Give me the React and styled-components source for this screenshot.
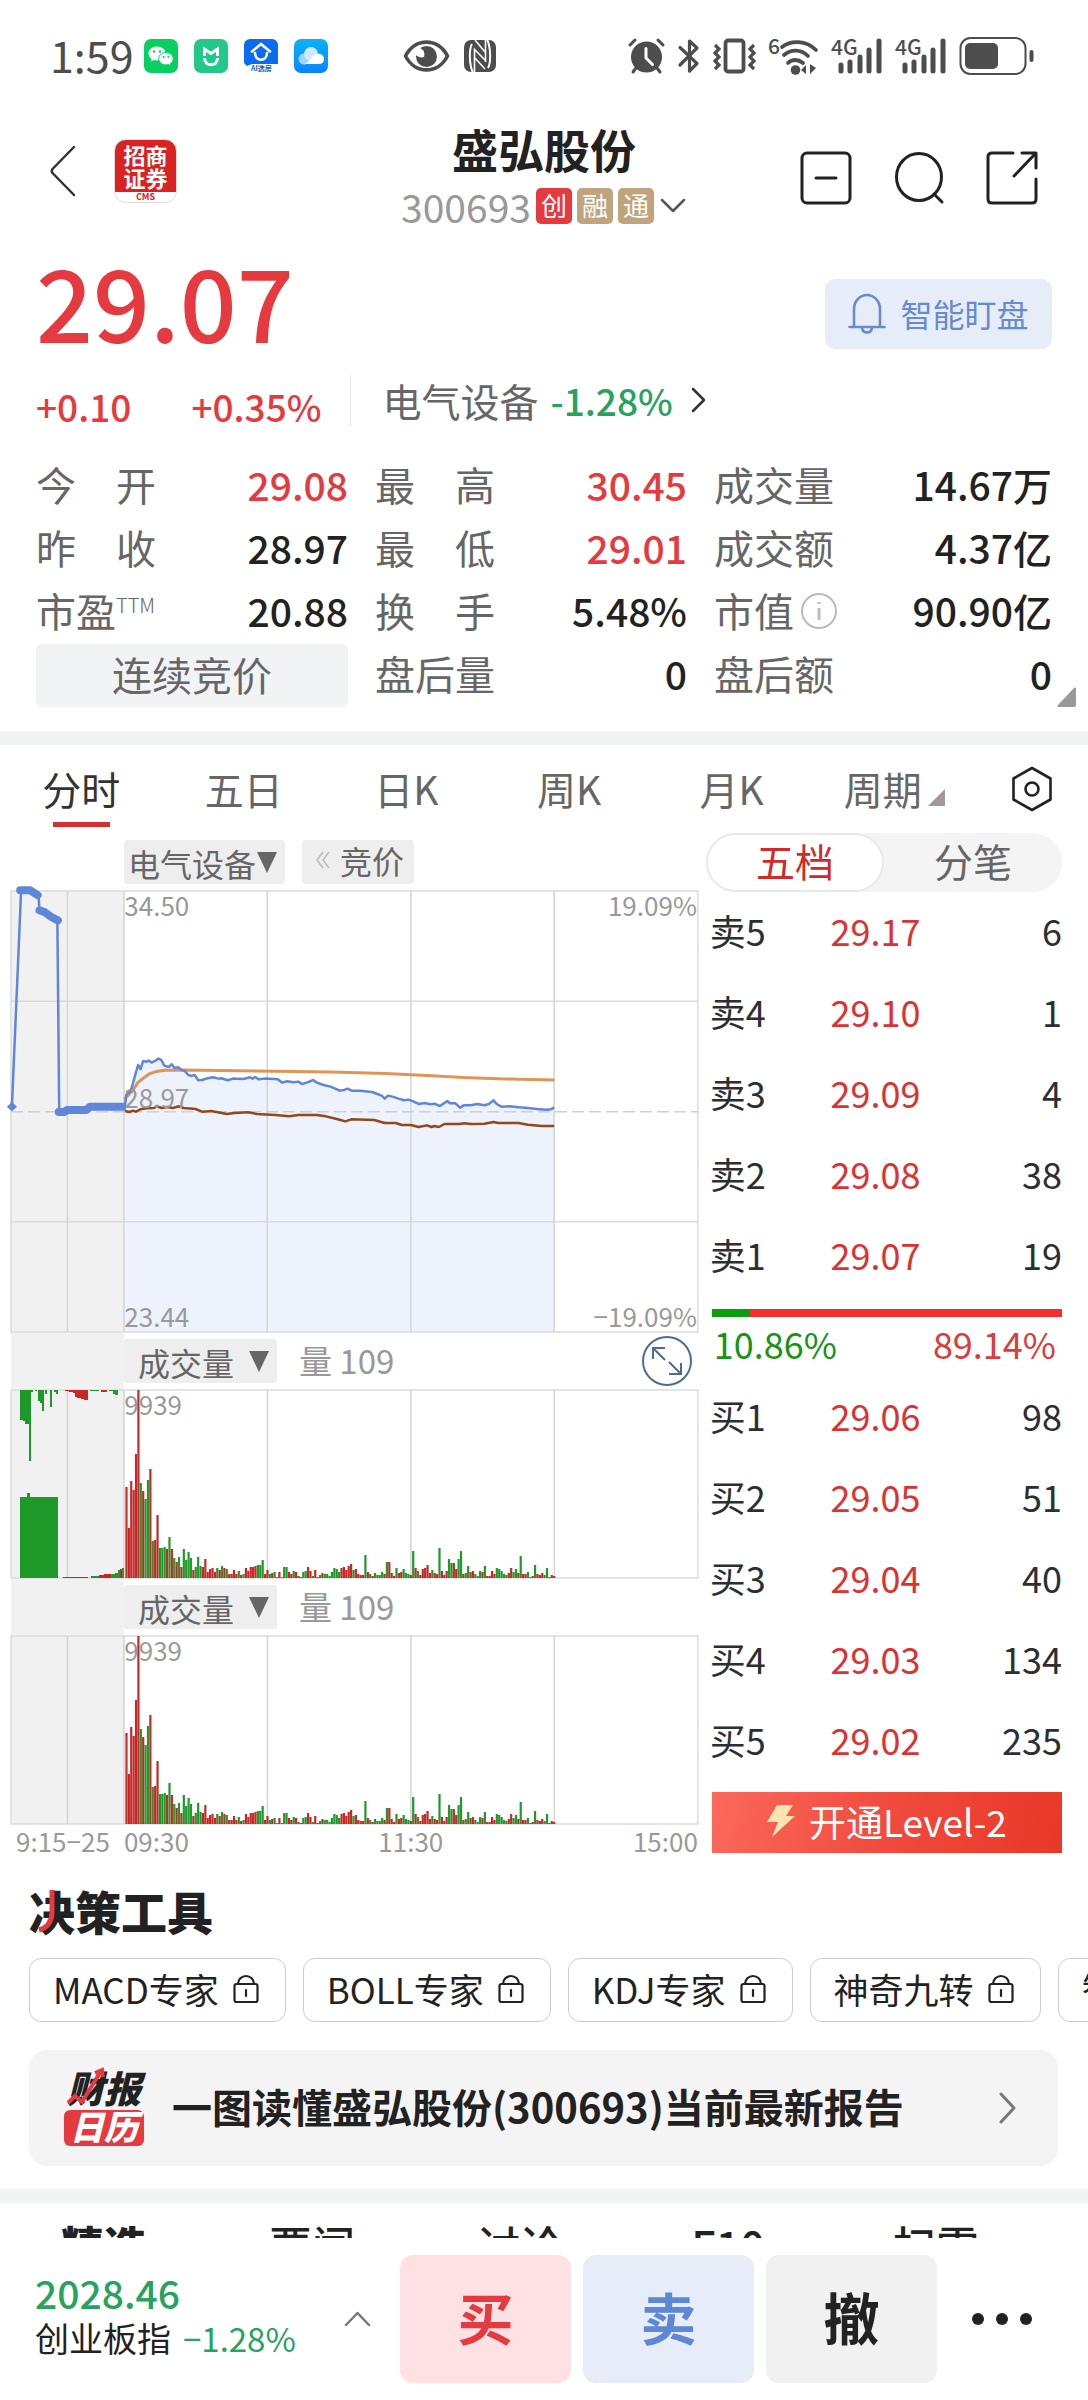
import React from 'react';
import styled, { createGlobalStyle } from 'styled-components';

const RED = '#e53a40';
const GREEN = '#27a35f';
const INK = '#222';
const GREY = '#666';

const GlobalStyle = createGlobalStyle`
  * {
    box-sizing: border-box;
  }

  body {
    margin: 0;
    background: #fff;
    color: ${INK};
    font-family: 'Noto Sans CJK SC', sans-serif;
  }

  button, select {
    margin: 0;
    padding: 0;
    border: 0;
    background: none;
    color: inherit;
    font: inherit;
    cursor: pointer;
  }

  a {
    color: inherit;
    text-decoration: none;
  }

  svg {
    display: block;
    flex: none;
    overflow: visible;
  }
`;

const Page = styled.div`
  display: flex;
  flex-direction: column;
  height: 100vh;
`;

const Scroller = styled.main`
  flex: 1;
  min-height: 0;
  overflow: hidden auto;
  scrollbar-width: none;
`;

const Band = styled.div`
  height: 14px;
  background: #f2f3f5;
`;

/* ---------- status bar ---------- */

const StatusBar = styled.div`
  display: flex;
  align-items: center;
  height: 112px;
  padding: 0 54px 0 50px;
  color: #4d4d4d;
`;

const Clock = styled.span`
  margin-right: 10px;
  padding-bottom: 4px;
  font-size: 43px;
  line-height: 56px;
`;

const StatusGroup = styled.div`
  display: flex;
  align-items: center;
  gap: ${p => p.$gap}px;
  margin-left: ${p => p.$left || 0};
`;

/* ---------- header ---------- */

const Header = styled.header`
  display: grid;
  grid-template-columns: 1fr auto 1fr;
  align-items: center;
  padding: 8px 50px 0;
`;

const HeaderLeft = styled.div`
  display: flex;
  align-items: center;
  gap: 38px;
  padding-bottom: 14px;
`;

const HeaderRight = styled.div`
  display: flex;
  justify-content: flex-end;
  gap: 42px;
`;

const BrandLogo = styled.a`
  width: 63px;
  height: 64px;
  border: 1px solid #ddd;
  border-radius: 12px;
  background: linear-gradient(#d92323 52px, #fff 52px);
  color: #fff;
  font-size: 22px;
  font-weight: 700;
  line-height: 23px;
  text-align: center;

  span {
    display: block;
    padding-top: 3px;
  }

  small {
    display: block;
    margin-top: 3px;
    color: #d92323;
    font-size: 9px;
    line-height: 10px;
  }
`;

const TitleBox = styled.div`
  text-align: center;
`;

const StockName = styled.h1`
  margin: 0;
  font-size: 46px;
  font-weight: 700;
  line-height: 56px;
`;

const CodeRow = styled.div`
  display: flex;
  align-items: center;
  gap: 5px;
  height: 60px;
  color: #999;
  font-size: 39px;
  line-height: 56px;
`;

const Tag = styled.span`
  width: 36px;
  height: 36px;
  border-radius: 5px;
  background: ${p => p.$color};
  color: #fff;
  font-size: 26px;
  line-height: 34px;
`;

/* ---------- quote ---------- */

const Quote = styled.section`
  padding: 14px 36px 24px;
`;

const PriceRow = styled.div`
  display: flex;
  align-items: flex-end;
  justify-content: space-between;
`;

const Price = styled.strong`
  color: ${RED};
  font-size: 100px;
  font-weight: 500;
  line-height: 99px;
`;

const WatchButton = styled.button`
  display: flex;
  align-items: center;
  justify-content: center;
  gap: 14px;
  width: 227px;
  height: 70px;
  padding-bottom: 2px;
  border-radius: 10px;
  background: #e7edf8;
  color: #668bd0;
  font-size: 32px;
`;

const ChangeRow = styled.div`
  display: flex;
  height: 52px;
  margin-top: 26px;
`;

const Changes = styled.div`
  display: flex;
  align-self: flex-end;
  gap: 60px;
  padding-right: 28px;
  color: ${RED};
  font-size: 37px;
  font-weight: 500;
  line-height: 42px;
`;

const Sector = styled.a`
  display: flex;
  align-items: center;
  gap: 12px;
  padding-bottom: 2px;
  padding-left: 32px;
  border-left: 1px solid #e6e6e6;
  color: ${GREY};
  font-size: 39px;
  line-height: 50px;

  b {
    margin-right: 6px;
    color: ${GREEN};
    font-size: 37px;
    font-weight: 500;
  }
`;

const Stats = styled.div`
  position: relative;
  display: grid;
  grid-template-columns: 12fr 12fr 13fr;
  grid-auto-rows: 63px;
  column-gap: 27px;
  margin-top: 28px;
`;

const Stat = styled.div`
  display: flex;
  align-items: center;
  justify-content: space-between;
  padding-bottom: 4px;
  font-size: 40px;
  line-height: 59px;
  white-space: nowrap;
`;

const StatLabel = styled.span`
  display: flex;
  align-items: center;
  gap: 6px;
  color: ${GREY};

  sup {
    margin-left: -6px;
    padding-bottom: 12px;
    font-size: 20px;
    font-weight: 300;
    line-height: 24px;
  }
`;

const StatValue = styled.span`
  color: ${p => (p.$up ? RED : INK)};
  font-size: 39px;
  font-weight: 500;
`;

const Phase = styled.div`
  border-radius: 5px;
  background: #f2f3f5;
  color: ${GREY};
  font-size: 40px;
  line-height: 60px;
  text-align: center;
`;

const Corner = styled.svg`
  position: absolute;
  right: -24px;
  bottom: 0;
`;

/* ---------- period tabs ---------- */

const PeriodTabs = styled.nav`
  display: grid;
  grid-template-columns: repeat(6, 13fr) 9fr;
  align-items: start;
  height: 82px;
`;

const PeriodTab = styled.button`
  position: relative;
  display: flex;
  align-items: flex-end;
  justify-content: center;
  gap: 6px;
  height: 82px;
  color: ${p => (p.$active ? '#333' : GREY)};
  font-size: 39px;
  line-height: 50px;
  padding: 18px 0 14px;

  svg {
    margin-bottom: 7px;
  }

  &::after {
    content: '';
    position: absolute;
    bottom: 0;
    left: 50%;
    width: 57px;
    height: 5px;
    margin-left: -28px;
    background: ${p => (p.$active ? '#d63031' : 'none')};
  }
`;

const SettingsButton = styled.button`
  display: flex;
  justify-content: center;
  padding-top: 21px;
`;

/* ---------- chart column ---------- */

const Market = styled.section`
  display: grid;
  grid-template-columns: minmax(0, 27fr) minmax(0, 14fr);
  column-gap: 8px;
  padding: 0 26px 0 11px;
`;

const ToolRow = styled.div`
  display: grid;
  grid-template-columns: 123fr 625fr;
  height: ${p => (p.$tall ? 64 : 58)}px;

  &::before {
    content: '';
    background: ${p => (p.$tall ? 'none' : '#f1f1f1')};
  }
`;

const Tools = styled.div`
  display: flex;
  align-items: center;
  padding-right: 6px;
  padding-top: ${p => (p.$tall ? 6 : 0)}px;
`;

const Picker = styled.label`
  display: flex;
  align-items: center;
  gap: ${p => (p.$wide ? 14 : 0)}px;
  height: 44px;
  padding: 0 8px 0 ${p => (p.$wide ? 14 : 4)}px;
  border-radius: 4px;
  background: #eee;
  color: ${GREY};
  font-size: 32px;

  select {
    appearance: none;
    height: 44px;
    padding-bottom: 4px;
  }

  select:focus {
    outline: none;
  }
`;

const AuctionButton = styled.button`
  display: flex;
  align-items: center;
  gap: 10px;
  height: 44px;
  margin-left: 17px;
  padding: 0 10px 4px 14px;
  border-radius: 4px;
  background: #eee;
  color: ${GREY};
  font-size: 32px;
`;

const Reading = styled.span`
  flex: 1;
  margin-left: 22px;
  padding-bottom: 2px;
  color: #999;
  font-size: 33px;
`;

const Plot = styled.div`
  position: relative;
  height: ${p => p.$height}px;
  color: #999;
  font-size: 26px;
  line-height: 28px;

  svg {
    width: 100%;
    height: 100%;
  }
`;

const ScaleLabel = styled.span`
  position: absolute;
  top: ${p => p.$top};
  ${p => (p.$right ? 'right: 1px' : 'left: 16.5%')};
`;

const Axis = styled.div`
  display: grid;
  grid-template-columns: 123fr 313fr 312fr;
  color: #999;
  font-size: 26px;
  line-height: 34px;

  span {
    white-space: nowrap;
  }

  span:first-child {
    padding-left: 5px;
  }

  span:last-child {
    display: flex;
    justify-content: space-between;
    margin-left: -38px;
  }
`;

/* ---------- order book ---------- */

const Book = styled.div`
  padding-top: 6px;
`;

const BookTabs = styled.div`
  display: flex;
  height: 59px;
  border-radius: 30px;
  background: #f4f4f4;
`;

const BookTab = styled.button`
  flex: 1;
  height: 59px;
  padding-bottom: 6px;
  border: 2px solid ${p => (p.$active ? '#e9e9e9' : 'transparent')};
  border-radius: 30px;
  background: ${p => (p.$active ? '#fff' : 'none')};
  color: ${p => (p.$active ? '#d12a2a' : GREY)};
  font-size: 39px;
  line-height: 48px;
`;

const Levels = styled.table`
  width: 100%;
  border-collapse: collapse;
  color: #2b2f33;
  font-size: 36px;
  line-height: 48px;

  tr {
    height: 81px;
  }

  th, td {
    padding: 0 0 6px;
    font-weight: 400;
    text-align: left;
  }

  th {
    width: 35%;
    padding-left: 4px;
  }

  td {
    color: #dc3232;
  }

  td:last-child {
    color: inherit;
    text-align: right;
  }
`;

const Ratio = styled.div`
  height: 8px;
  margin: 12px 0 0 6px;
  background: linear-gradient(to right, #0a9d0a 10.86%, #f52d2d 10.86%);
`;

const RatioText = styled.div`
  display: flex;
  justify-content: space-between;
  margin-bottom: 8px;
  padding: 0 6px 0 8px;
  color: #dc3c3c;
  font-size: 36px;
  line-height: 52px;

  span:first-child {
    color: #169416;
  }
`;

const LevelButton = styled.button`
  display: flex;
  align-items: center;
  justify-content: center;
  gap: 14px;
  width: calc(100% - 6px);
  height: 61px;
  margin: 10px 0 0 6px;
  padding-bottom: 3px;
  background: linear-gradient(100deg, #fa695c, #f04b3e 50%, #e83828);
  color: #fff;
  font-size: 37px;
  line-height: 50px;
`;

/* ---------- tools ---------- */

const Toolkit = styled.section`
  padding: 24px 0 23px 29px;
`;

const ToolkitTitle = styled.h2`
  position: relative;
  margin: 0 0 20px;
  font-size: 46px;
  font-weight: 900;
  line-height: 56px;

  svg {
    position: absolute;
    left: 8px;
    top: 7px;
  }
`;

const Experts = styled.div`
  display: flex;
  gap: 17px;
  overflow: hidden;
`;

const Expert = styled.button`
  display: flex;
  flex: none;
  align-items: center;
  gap: 14px;
  height: 64px;
  padding: 0 26px 2px 23px;
  border: 1px solid #ccc;
  border-radius: 12px;
  font-size: 35px;
  line-height: 52px;
`;

const ReportCard = styled.a`
  display: flex;
  align-items: center;
  height: 116px;
  margin: 28px 30px 0 0;
  padding: 0 42px 0 35px;
  border-radius: 18px;
  background: #f4f4f4;
  font-size: 40px;
  font-weight: 700;
`;

const ReportText = styled.span`
  flex: 1;
  margin-left: 28px;
  padding-bottom: 4px;
`;

const ReportLogo = styled.span`
  position: relative;
  display: block;
  width: 80px;
  font-size: 37px;
  font-style: italic;
  font-weight: 900;
  line-height: 34px;
  text-align: center;

  span {
    display: block;
    height: 36px;
    margin-top: 6px;
    border-radius: 6px;
    background: ${RED};
    color: #fff;
    font-size: 34px;
    line-height: 32px;
  }

  svg {
    position: absolute;
    left: 2px;
    top: -2px;
  }
`;

const InfoTabs = styled.nav`
  display: grid;
  grid-template-columns: repeat(5, 1fr);
  padding-right: 48px;
`;

const InfoTab = styled.button`
  font-size: 43px;
  font-weight: ${p => (p.$active ? 900 : 500)};
  line-height: 82px;
`;

/* ---------- trade bar ---------- */

const TradeBar = styled.footer`
  display: grid;
  grid-template-columns: 353fr 171fr 171fr 171fr 106fr;
  column-gap: 12px;
  padding: 17px 33px 17px 35px;
  background: #fff;
`;

const IndexBox = styled.div`
  display: flex;
  align-items: center;
  justify-content: space-between;
  padding-right: 17px;
  white-space: nowrap;
`;

const IndexValue = styled.div`
  color: ${GREEN};
  font-size: 39px;
  font-weight: 500;
  line-height: 44px;
`;

const IndexName = styled.div`
  padding-bottom: 6px;
  font-size: 34px;
  line-height: 48px;

  span {
    margin-left: 12px;
    color: ${GREEN};
    font-size: 33px;
  }
`;

const TradeButton = styled.button`
  height: 128px;
  padding-bottom: 7px;
  border-radius: 13px;
  background: ${p => p.$bg};
  color: ${p => p.$color};
  font-size: 56px;
  font-weight: 700;
`;

const MoreButton = styled.button`
  display: flex;
  align-items: center;
  justify-content: center;
`;

/* ---------- icons ---------- */

const Chevron = ({ w, h, d, color = '#333', width = 2.5 }) => (
  <svg width={w} height={h} fill="none" stroke={color} strokeWidth={width} strokeLinecap="round" strokeLinejoin="round">
    <path d={d} />
  </svg>
);

const DownTriangle = () => (
  <svg width="20" height="22" viewBox="0 0 20 22" fill="#666">
    <path d="M0 1h20L10 22z" />
  </svg>
);

const Lock = () => (
  <svg width="26" height="30" viewBox="0 0 26 30" fill="none" stroke="#222" strokeWidth="2.2" strokeLinecap="round">
    <rect x="1.5" y="10" width="23" height="18" rx="2" />
    <path d="M5 10a8 8 0 0 1 16 0M13 16v6" />
  </svg>
);

const WechatIcon = () => (
  <svg width="34" height="34" viewBox="0 0 34 34">
    <rect width="34" height="34" rx="7" fill="#07cf62" />
    <g fill="#fff">
      <path d="M13 7.500c-4.800 0-8.500 3-8.500 7 0 2.200 1.200 4.100 3.200 5.400L7 22.500l3-1.500c1 .3 2 .4 3 .4 4.700 0 8.500-3 8.500-6.900s-3.800-7-8.500-7z" />
      <path d="M22 13.500c-4.200 0-7.300 2.700-7.300 6.200s3.100 6.200 7.300 6.200c.9 0 1.700-.1 2.500-.4l2.500 1.400-.6-2.300c1.800-1.200 2.800-2.900 2.800-4.900 0-3.500-3.100-6.200-7.200-6.200z" stroke="#07cf62" strokeWidth="1" />
    </g>
    <g fill="#07cf62">
      <circle cx="10" cy="12.500" r="1.200" />
      <circle cx="16" cy="12.500" r="1.200" />
      <circle cx="19.600" cy="18" r="1" />
      <circle cx="24.500" cy="18" r="1" />
    </g>
  </svg>
);

const MiIcon = () => (
  <svg width="34" height="34" viewBox="0 0 34 34" fill="none" stroke="#fff" strokeWidth="3">
    <rect width="34" height="34" rx="7" fill="#22c889" stroke="none" />
    <path d="M10.500 17V10l6.500 4.500L23.500 10v7" />
    <path d="M10.500 19c0 9 13 9 13 0" />
  </svg>
);

const HouseIcon = () => (
  <svg width="34" height="34" viewBox="0 0 34 34">
    <path d="M6 0h22a6 6 0 0 1 6 6v19H8l-5 2-3-3V6a6 6 0 0 1 6-6z" fill="#0a6cf0" />
    <path d="M8 12.500l9-7.500 9 7.500M11 14c0 9 12 9 12 0" fill="none" stroke="#fff" strokeWidth="2.600" strokeLinecap="round" />
    <text x="7" y="32" fontSize="7" fontWeight="700" fill="#0a5cc8">AI选房</text>
  </svg>
);

const CloudIcon = () => (
  <svg width="34" height="34" viewBox="0 0 34 34">
    <defs>
      <linearGradient id="sky" x2="0" y2="1">
        <stop stopColor="#08b4fb" />
        <stop offset="1" stopColor="#0a84fb" />
      </linearGradient>
    </defs>
    <rect width="34" height="34" rx="7" fill="url(#sky)" />
    <circle cx="10" cy="20" r="5.500" fill="#9fd3fd" />
    <circle cx="17" cy="15" r="7" fill="#cfe8fe" />
    <path d="M9 25c6-1 7-5 10-8 4-4 11-2 11 3 0 3-2 5-5 5z" fill="#fff" />
  </svg>
);

const EyeIcon = () => (
  <svg width="47" height="34" viewBox="0 0 47 34" fill="none" stroke="#4d4d4d" strokeWidth="3.600">
    <path d="M2.500 17C12-1.500 35-1.500 44.500 17 35 35.500 12 35.500 2.500 17z" strokeLinejoin="round" />
    <circle cx="23.500" cy="17.500" r="10.500" fill="#4d4d4d" stroke="none" />
    <path d="M13 9c4-1 10 2 8 9-3 1-6 0-8-2z" fill="#fff" stroke="none" />
  </svg>
);

const NfcIcon = () => (
  <svg width="32" height="34" viewBox="0 0 32 34">
    <rect y="1" width="32" height="32" rx="7" fill="#4d4d4d" />
    <g fill="none" stroke="#fff" strokeWidth="2">
      <path d="M9 34C5 25 5 10 8 5M23 0c4 9 4 24 1 29" />
      <path d="M10.500 33V10.500L22 22M21.500 1v22M11 1l10 12M10 18l11 12" strokeWidth="1.600" />
    </g>
  </svg>
);

const AlarmIcon = () => (
  <svg width="37" height="36" viewBox="0 0 37 36" fill="none" stroke="#4d4d4d" strokeWidth="3" strokeLinecap="round">
    <circle cx="18.500" cy="19" r="15.500" fill="#4d4d4d" stroke="none" />
    <path d="M2 7l5-5M35 7l-5-5M8 30l-3 4M29 30l3 4" />
    <path d="M18 10.500V20l6.500 6.500" stroke="#fff" />
  </svg>
);

const BluetoothIcon = () => (
  <svg width="22" height="36" viewBox="0 0 22 36" fill="none" stroke="#4d4d4d" strokeWidth="3.200" strokeLinejoin="round" strokeLinecap="round">
    <path d="M2 9.500l17 16-7.500 7.500V3l7.500 7-17 17" />
  </svg>
);

const VibrateIcon = () => (
  <svg width="43" height="36" viewBox="0 0 43 36" fill="none" stroke="#4d4d4d" strokeWidth="3.200">
    <rect x="12.500" y="2.500" width="18" height="31" rx="2.500" strokeWidth="3.800" />
    <path d="M2 7l4 4-4 4 4 4-4 4 4 4-4 4M41 7l-4 4 4 4-4 4 4 4-4 4 4 4" />
  </svg>
);

const WifiIcon = () => (
  <svg width="49" height="38" viewBox="0 0 49 38" fill="none" stroke="#4d4d4d" strokeWidth="3.800" strokeLinecap="round">
    <text x="-1" y="17" fontSize="21" fontWeight="500" fill="#4d4d4d" stroke="none">6</text>
    <path d="M13 10c9-7 24-7 34 3M15 18c7-6 17-6 24 1M19 26c4-4 10-4 15 0" />
    <circle cx="26.500" cy="33" r="4.800" fill="#4d4d4d" stroke="none" />
    <path d="M32 33l5-5v9zM47 31l-6-4v10z" fill="#4d4d4d" stroke="none" />
  </svg>
);

const SignalIcon = () => (
  <svg width="51" height="38" viewBox="0 0 51 38" fill="none" stroke="#4d4d4d" strokeWidth="5" strokeLinecap="round">
    <text x="0" y="18" fontSize="21" fontWeight="500" fill="#4d4d4d" stroke="none">4G</text>
    <path d="M10 28v6M19 25v9M29 20v14M38 13v21M48 4v30" />
  </svg>
);

const BatteryIcon = () => (
  <svg width="75" height="38" viewBox="0 0 75 38" fill="none" stroke="#4d4d4d" strokeWidth="2">
    <rect x="1.500" y="1" width="65" height="36" rx="10" />
    <rect x="6" y="6" width="33" height="26" rx="5" fill="#4d4d4d" stroke="none" />
    <path d="M72.500 15v8" strokeWidth="4" strokeLinecap="round" />
  </svg>
);

/* ---------- data ---------- */

const stats = [
  ['今　开', '29.08', true],
  ['最　高', '30.45', true],
  ['成交量', '14.67万'],
  ['昨　收', '28.97'],
  ['最　低', '29.01', true],
  ['成交额', '4.37亿'],
  ['市盈', '20.88'],
  ['换　手', '5.48%'],
  ['市值', '90.90亿'],
];

const sells = [
  ['卖5', '29.17', 6],
  ['卖4', '29.10', 1],
  ['卖3', '29.09', 4],
  ['卖2', '29.08', 38],
  ['卖1', '29.07', 19],
];

const buys = [
  ['买1', '29.06', 98],
  ['买2', '29.05', 51],
  ['买3', '29.04', 40],
  ['买4', '29.03', 134],
  ['买5', '29.02', 235],
];

const priceLine =
  '271,752 275,705 285,692 290,668 296,638 301,615 306,628 312,603 318,606 324,602 330,608 338,603 345,596 351,600 358,617 368,621 374,613 380,624 388,622 396,630 402,632 410,645 418,648 424,645 432,661 440,660 452,655 464,652 476,656 482,655 496,661 508,656 530,657 545,652 550,656 556,651 563,658 580,656 605,658 615,668 625,664 640,667 650,665 658,672 668,668 676,664 682,660 690,668 705,675 720,680 740,692 750,690 757,686 766,692 785,692 810,696 822,702 832,708 838,716 845,707 855,710 868,716 880,721 890,719 900,724 912,732 925,729 938,733 946,731 958,738 966,731 974,723 980,730 992,730 1002,743 1010,736 1025,736 1040,732 1055,736 1065,732 1075,721 1082,732 1092,740 1110,739 1130,742 1150,744 1170,747 1190,749 1200,748 1207,742';

const averageLine =
  '271,718 280,705 290,690 300,668 312,655 325,642 340,635 360,631 400,630 480,632 600,634 720,636 840,641 930,647 1010,653 1100,657 1207,660';

const sectorLine =
  '272,753 282,756 290,752 296,755 308,747 320,745 335,744 342,739 352,744 364,741 376,744 390,739 400,744 426,747 440,755 460,753 480,758 494,762 510,759 540,757 560,762 600,765 630,769 650,765 690,765 710,769 740,779 752,784 765,778 815,780 838,789 862,789 875,795 895,795 912,801 930,796 940,801 946,798 956,801 968,792 1000,792 1012,790 1025,792 1055,791 1075,786 1085,789 1130,789 1150,794 1180,798 1207,798';

// one entry a minute: bar height and its direction
const volumes = (
  '91r 50r 97r 88r 124r 188r 95g 87r 79g 98g 109r 37g 38r 63r 30g 30g 31g 29r 41g 29r 20g 16r 21g 11r 29g 18g 26g 20g 8r 11g ' +
  '21g 12g 11r 19r 6r 9r 10r 6r 10g 8r 12g 10r 9g 4r 4r 8r 4r 7g 3r 4g 10r 7r 11r 11r 12r 13g 13g 18g 4r 8r ' +
  '4g 5r 6g 1g 6r 1g 11g 11g 6r 4r 7g 6r 2r 1r 6g 7g 11r 7r 2g 8r 1r 3g 5r 4g 4g 2g 6g 10g 9g 6g ' +
  '10r 11r 8r 12r 14r 8g 9r 4r 3r 3r 23g 6r 4g 2r 5g 3g 3g 6g 4r 16g 16r 5r 2r 10g 5r 6r 9g 5g 4g 3r ' +
  '27g 10r 7g 3r 9r 10r 13r 5r 8g 5r 4r 30g 7r 3r 7r 19g 15g 15r 9r 19g 27g 4r 5g 12g 6r 7r 4g 2g 7g 6r ' +
  '12g 2r 2r 7r 4r 10g 9g 7g 4g 3g 5r 10r 6g 9g 5r 22g 4r 4r 6g 1g 2r 13g 4r 3r 5r 3g 10g 1r 3r 2r'
)
  .split(' ')
  .map(item => ({ size: parseInt(item, 10), up: item.endsWith('r') }));

const UP = '#c62828';
const DOWN = '#1f9a2a';

// call auction bars hanging from the top edge: x, width, height, direction
const auctionTop = [
  [9, 3, 30], [12, 2, 31], [14, 4, 34], [18, 2, 71], [20, 2, 2], [24, 2, 1], [27, 2, 11], [29, 2, 13],
  [31, 2, 21], [34, 2, 4], [39, 2, 17], [43, 2, 2], [45, 2, 4], [54, 4, 1, 1], [58, 4, 2, 1],
  [62, 2, 3, 1], [64, 2, 7, 1], [66, 4, 8, 1], [70, 3, 9, 1], [73, 4, 10, 1], [79, 9, 1],
  [90, 6, 2, 1], [98, 4, 1], [102, 2, 4], [104, 3, 5],
];

const auctionBottom = [
  [9, 38, 81], [16, 3, 85], [52, 25, 1, 1], [80, 8, 2], [88, 5, 3, 1], [93, 7, 4, 1],
  [100, 4, 4], [104, 3, 5], [107, 2, 8], [109, 2, 9, 1], [111, 2, 10],
];

/* ---------- parts ---------- */

const PricePlot = () => (
  <Plot $height={441}>
    <svg viewBox="24 94 1496 1321" preserveAspectRatio="none" fill="none">
      <rect x="24" y="94" width="246" height="1321" fill="#f1f1f1" />
      <polygon points={`270,1415 ${priceLine} 1207,1415`} fill="#edf2fd" />
      <g stroke="#dcdcdc" strokeWidth="1.500">
        <path d="M24 94H1520V1415H24zM24 424H1520M24 1085H1520" vectorEffect="non-scaling-stroke" />
        <path d="M147 94V1415M270 94V1415M582 94V1415M895 94V1415M1207 94V1415" stroke="#d4d4d4" vectorEffect="non-scaling-stroke" />
        <path d="M24 755H1520" strokeDasharray="12 5" stroke="#d0d0d0" vectorEffect="non-scaling-stroke" />
      </g>
      <g strokeWidth="2.500" strokeLinejoin="round">
        <polyline points={averageLine} stroke="#e09458" strokeWidth="3" vectorEffect="non-scaling-stroke" />
        <polyline points={sectorLine} stroke="#94461c" vectorEffect="non-scaling-stroke" />
        <polyline points={priceLine} stroke="#5f86d8" vectorEffect="non-scaling-stroke" />
        <path d="M26 740L46 92L84 108L86 152L125 182L129 755" stroke="#5f86d8" vectorEffect="non-scaling-stroke" />
        <path
          d="M44 92H66L82 106M86 152L98 158L112 172L126 182M128 756H140L146 750H188L196 740H266"
          stroke="#5f86d8"
          strokeWidth="8"
          strokeLinecap="round"
          vectorEffect="non-scaling-stroke"
        />
        <path d="M26 726L37 740L26 754L15 740z" fill="#5f86d8" />
      </g>
    </svg>
    <ScaleLabel $top="0">34.50</ScaleLabel>
    <ScaleLabel $top="0" $right>19.09%</ScaleLabel>
    <ScaleLabel $top="192px">28.97</ScaleLabel>
    <ScaleLabel $top="411px">23.44</ScaleLabel>
    <ScaleLabel $top="411px" $right>−19.09%</ScaleLabel>
  </Plot>
);

const VolumePlot = ({ auction }) => (
  <Plot $height={188}>
    <svg viewBox="0 0 687 188" preserveAspectRatio="none">
      <rect width="113" height="188" fill="#f1f1f1" />
      <path d="M0 0H687V188H0z" fill="none" stroke="#dcdcdc" strokeWidth="1.500" />
      <path d="M56.500 0V188M113 0V188M256.500 0V188M400 0V188M543.500 0V188" stroke="#d4d4d4" strokeWidth="1.500" />
      {volumes.map((bar, i) => (
        <rect
          key={i}
          x={114.4 + i * 2.39}
          y={188 - bar.size}
          width="2.200"
          height={bar.size}
          fill={bar.up ? UP : DOWN}
        />
      ))}
      {auction && auctionTop.map(([x, w, h, up]) => (
        <rect key={x} x={x} width={w} height={h} fill={up ? UP : DOWN} />
      ))}
      {auction && auctionBottom.map(([x, w, h, up]) => (
        <rect key={x} x={x} y={188 - h} width={w} height={h} fill={up ? UP : DOWN} />
      ))}
    </svg>
    <ScaleLabel $top="0">9939</ScaleLabel>
  </Plot>
);

const VolumeTools = ({ children }) => (
  <ToolRow>
    <Tools>
      <Picker $wide>
        <select aria-label="指标">
          <option>成交量</option>
        </select>
        <DownTriangle />
      </Picker>
      <Reading>量 109</Reading>
      {children}
    </Tools>
  </ToolRow>
);

const LevelTable = ({ rows }) => (
  <Levels>
    <tbody>
      {rows.map(([name, price, count]) => (
        <tr key={name}>
          <th scope="row">{name}</th>
          <td>{price}</td>
          <td>{count}</td>
        </tr>
      ))}
    </tbody>
  </Levels>
);

const App = () => (
  <Page>
    <GlobalStyle />
    <Scroller>
      <StatusBar>
        <Clock>1:59</Clock>
        <StatusGroup $gap={16}>
          <WechatIcon />
          <MiIcon />
          <HouseIcon />
          <CloudIcon />
        </StatusGroup>
        <StatusGroup $gap={14} $left="75px">
          <EyeIcon />
          <NfcIcon />
        </StatusGroup>
        <StatusGroup $gap={13} $left="auto">
          <AlarmIcon />
          <BluetoothIcon />
          <VibrateIcon />
          <WifiIcon />
          <SignalIcon />
          <SignalIcon />
          <BatteryIcon />
        </StatusGroup>
      </StatusBar>

      <Header>
        <HeaderLeft>
          <button aria-label="返回">
            <Chevron w={26} h={54} d="M24 3L2.500 25Q1 27 2.500 29L24 51" />
          </button>
          <BrandLogo href="#cms">
            <span>招商<br />证券</span>
            <small>CMS</small>
          </BrandLogo>
        </HeaderLeft>
        <TitleBox>
          <StockName>盛弘股份</StockName>
          <CodeRow>
            300693
            <Tag $color={RED}>创</Tag>
            <Tag $color="#bfa47e">融</Tag>
            <Tag $color="#bfa47e">通</Tag>
            <Chevron w={28} h={18} d="M3 3L14 14L25 3" color="#555" />
          </CodeRow>
        </TitleBox>
        <HeaderRight>
          <button aria-label="删除自选">
            <svg width="52" height="54" fill="none" stroke="#222" strokeWidth="3" strokeLinecap="round">
              <rect x="2" y="2" width="48" height="50" rx="5" />
              <path d="M16 27h20" />
            </svg>
          </button>
          <button aria-label="搜索">
            <svg width="50" height="54" fill="none" stroke="#222" strokeWidth="3" strokeLinecap="round">
              <ellipse cx="25" cy="26" rx="22.500" ry="23.500" />
              <path d="M40 43l8 8" />
            </svg>
          </button>
          <button aria-label="分享">
            <svg width="52" height="54" fill="none" stroke="#222" strokeWidth="3" strokeLinecap="round" strokeLinejoin="round">
              <path d="M27 2H6Q2 2 2 6V48Q2 52 6 52H46Q50 52 50 48V28M36 2H50V17M49 3L28 25" />
            </svg>
          </button>
        </HeaderRight>
      </Header>

      <Quote>
        <PriceRow>
          <Price>29.07</Price>
          <WatchButton>
            <svg width="38" height="41" fill="none" stroke="#668bd0" strokeWidth="2.600" strokeLinecap="round">
              <path d="M1.500 34H36.500M6 34V16a13 14 0 0 1 26 0V34M14 35c1 6 9 6 10 0" />
            </svg>
            智能盯盘
          </WatchButton>
        </PriceRow>
        <ChangeRow>
          <Changes>
            <span>+0.10</span>
            <span>+0.35%</span>
          </Changes>
          <Sector href="#sector">
            电气设备
            <b>-1.28%</b>
            <Chevron w={16} h={26} d="M2 2L13 13L2 24" />
          </Sector>
        </ChangeRow>
        <Stats>
          {stats.map(([label, value, up]) => (
            <Stat key={label}>
              <StatLabel>
                {label}
                {label === '市盈' && <sup>TTM</sup>}
                {label === '市值' && (
                  <svg width="38" height="38" fill="none" stroke="#bbb" strokeWidth="2">
                    <circle cx="19" cy="19" r="17" />
                    <path d="M19 16v12M19 10v2" strokeWidth="3" />
                  </svg>
                )}
              </StatLabel>
              <StatValue $up={up}>{value}</StatValue>
            </Stat>
          ))}
          <Phase>连续竞价</Phase>
          <Stat>
            <StatLabel>盘后量</StatLabel>
            <StatValue>0</StatValue>
          </Stat>
          <Stat>
            <StatLabel>盘后额</StatLabel>
            <StatValue>0</StatValue>
          </Stat>
          <Corner width="19" height="20" fill="#999">
            <path d="M19 1V18Q19 20 17 20H1Q0 19 1 18L17 1Q18 0 19 1z" />
          </Corner>
        </Stats>
      </Quote>

      <Band />

      <PeriodTabs>
        <PeriodTab $active>分时</PeriodTab>
        <PeriodTab>五日</PeriodTab>
        <PeriodTab>日K</PeriodTab>
        <PeriodTab>周K</PeriodTab>
        <PeriodTab>月K</PeriodTab>
        <PeriodTab>
          周期
          <svg width="17" height="17" fill="#a39999">
            <path d="M17 0V17H0z" />
          </svg>
        </PeriodTab>
        <SettingsButton aria-label="设置">
          <svg width="42" height="46" fill="none" stroke="#222" strokeWidth="2.600" strokeLinejoin="round">
            <path d="M21 2L39.500 12.500V33.500L21 44L2.500 33.500V12.500z" />
            <circle cx="21" cy="23" r="6.500" />
          </svg>
        </SettingsButton>
      </PeriodTabs>

      <Market>
        <div>
          <ToolRow $tall>
            <Tools $tall>
              <Picker>
                <select aria-label="板块">
                  <option>电气设备</option>
                </select>
                <DownTriangle />
              </Picker>
              <AuctionButton>
                <svg width="14" height="18" fill="none" stroke="#bbb" strokeWidth="1.500">
                  <path d="M7 1L1 9L7 17M13 1L7 9L13 17" />
                </svg>
                竞价
              </AuctionButton>
            </Tools>
          </ToolRow>
          <PricePlot />
          <VolumeTools>
            <button aria-label="全屏">
              <svg width="50" height="50" fill="none" stroke="#4a6d96" strokeWidth="2">
                <circle cx="25" cy="25" r="24" />
                <path d="M11 23V12H23M11 12L23 24M39 27V38H27M39 38L27 26" />
              </svg>
            </button>
          </VolumeTools>
          <VolumePlot auction />
          <VolumeTools />
          <VolumePlot />
          <Axis>
            <span>9:15−25</span>
            <span>09:30</span>
            <span>
              <span>11:30</span>
              <span>15:00</span>
            </span>
          </Axis>
        </div>

        <Book>
          <BookTabs>
            <BookTab $active>五档</BookTab>
            <BookTab>分笔</BookTab>
          </BookTabs>
          <LevelTable rows={sells} />
          <Ratio />
          <RatioText>
            <span>10.86%</span>
            <span>89.14%</span>
          </RatioText>
          <LevelTable rows={buys} />
          <LevelButton>
            <svg width="28" height="32" fill="#ffe3b0">
              <path d="M10 0H26L19 11H28L5 32L11 17H0z" />
            </svg>
            开通Level-2
          </LevelButton>
        </Book>
      </Market>

      <Toolkit>
        <ToolkitTitle>
          决策工具
          <svg width="20" height="44" fill="none" stroke={RED} strokeWidth="5">
            <path d="M15 1V24Q14 38 2 41" />
          </svg>
        </ToolkitTitle>
        <Experts>
          {['MACD专家', 'BOLL专家', 'KDJ专家', '神奇九转', '智能选股'].map(name => (
            <Expert key={name}>
              {name}
              <Lock />
            </Expert>
          ))}
        </Experts>
        <ReportCard href="#report">
          <ReportLogo>
            财报
            <span>日历</span>
            <svg width="42" height="38" fill="none" stroke={RED} strokeWidth="4">
              <path d="M2 35L9 28L16 34L35 3M29 5L36 2L37 9" />
            </svg>
          </ReportLogo>
          <ReportText>一图读懂盛弘股份(300693)当前最新报告</ReportText>
          <Chevron w={17} h={32} d="M2 2L15 16L2 30" color="#777" width={3} />
        </ReportCard>
      </Toolkit>

      <Band />

      <InfoTabs>
        <InfoTab $active>精选</InfoTab>
        <InfoTab>要闻</InfoTab>
        <InfoTab>讨论</InfoTab>
        <InfoTab>F10</InfoTab>
        <InfoTab>扫雷</InfoTab>
      </InfoTabs>
    </Scroller>

    <TradeBar>
      <IndexBox>
        <div>
          <IndexValue>2028.46</IndexValue>
          <IndexName>
            创业板指
            <span>−1.28%</span>
          </IndexName>
        </div>
        <Chevron w={27} h={16} d="M2 14L13.500 2L25 14" color="#777" />
      </IndexBox>
      <TradeButton $bg="#fde1e3" $color={RED}>买</TradeButton>
      <TradeButton $bg="#e7edf8" $color="#5e88d6">卖</TradeButton>
      <TradeButton $bg="#f1f1f1" $color={INK}>撤</TradeButton>
      <MoreButton aria-label="更多">
        <svg width="60" height="12" fill="#222">
          <circle cx="6" cy="6" r="6" />
          <circle cx="30" cy="6" r="6" />
          <circle cx="54" cy="6" r="6" />
        </svg>
      </MoreButton>
    </TradeBar>
  </Page>
);

export default App;
